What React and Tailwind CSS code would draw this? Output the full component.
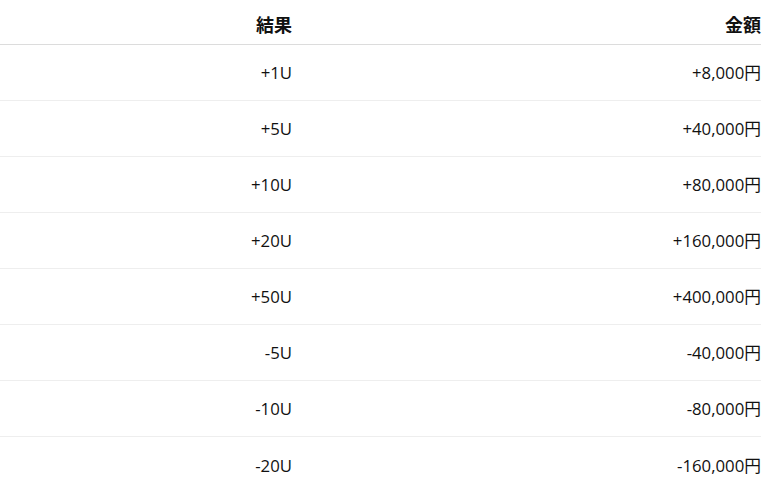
export default function App() {
  const rows = [
    ["+1U", "+8,000円"],
    ["+5U", "+40,000円"],
    ["+10U", "+80,000円"],
    ["+20U", "+160,000円"],
    ["+50U", "+400,000円"],
    ["-5U", "-40,000円"],
    ["-10U", "-80,000円"],
    ["-20U", "-160,000円"],
  ];
  return (
    <div
      className="w-[775px] h-[494px] overflow-hidden bg-white text-[#111]"
      style={{ fontFamily: '"Open Sans", "Noto Sans CJK JP", sans-serif' }}
    >
      <table className="w-[761px] border-collapse text-[16.75px]">
        <thead>
          <tr className="h-[44px] border-b border-[#dcdcdc]">
            <th className="w-[293px] text-right font-bold text-[18px] pt-[8px] pr-[1px]">結果</th>
            <th className="text-right font-bold text-[18px] pt-[8px]">金額</th>
          </tr>
        </thead>
        <tbody>
          {rows.map(([a, b], i) => (
            <tr
              key={a}
              className={i < rows.length - 1 ? "h-[56px] border-b border-[#eeeeee]" : "h-[56px]"}
            >
              <td className="text-right pr-[1px] pt-[2px]">{a}</td>
              <td className="text-right pt-[2px]">{b}</td>
            </tr>
          ))}
        </tbody>
      </table>
    </div>
  );
}
